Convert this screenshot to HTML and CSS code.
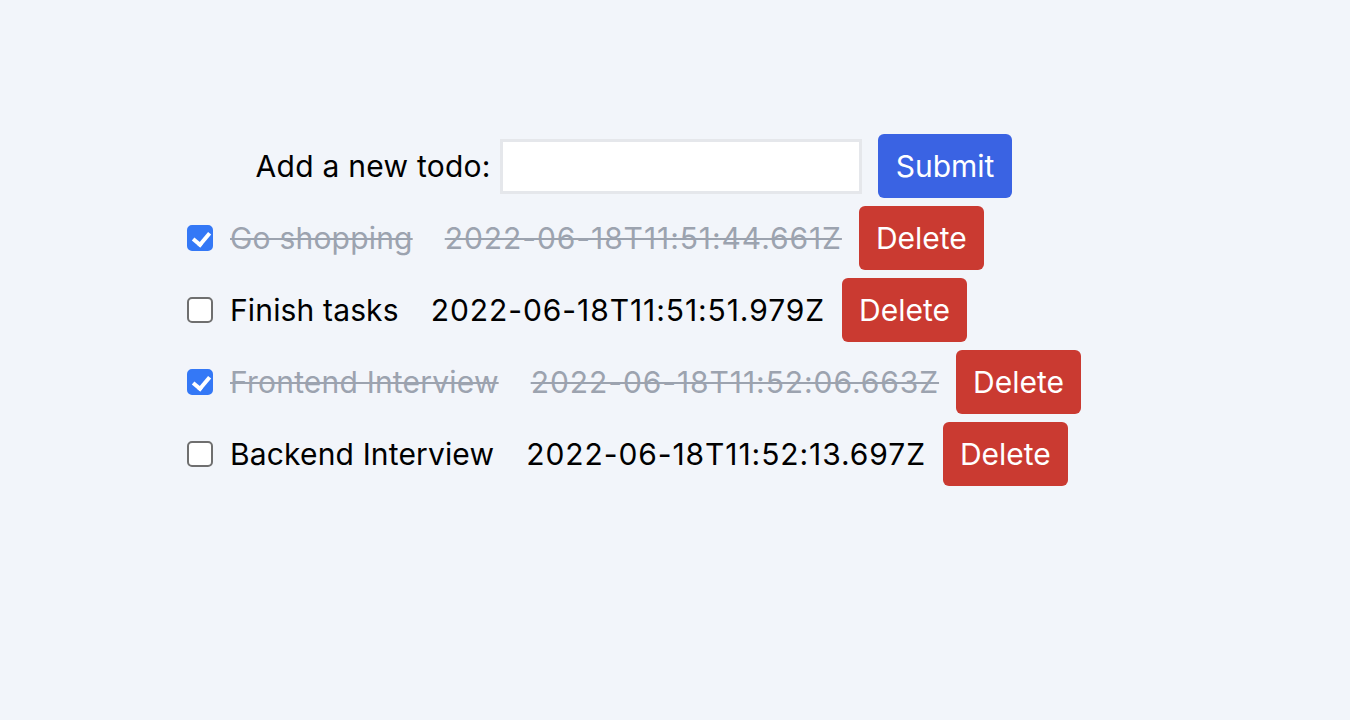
FILE: index.html
```html
<!DOCTYPE html>
<html>
<head>
<meta charset="utf-8">
<link rel="stylesheet" href="styles.css">
</head>
<body>
<div class="app">
  <form class="add-form">
    <label class="add-label" for="new">Add a new todo:</label>
    <input class="add-input" id="new" type="text">
    <button type="button" class="btn btn-submit">Submit</button>
  </form>
  <ul class="list">
    <li class="item done">
      <input class="check" type="checkbox" checked>
      <span class="title">Go shopping</span>
      <span class="time">2022-06-18T11:51:44.661Z</span>
      <button type="button" class="btn btn-delete">Delete</button>
    </li>
    <li class="item">
      <input class="check" type="checkbox">
      <span class="title">Finish tasks</span>
      <span class="time">2022-06-18T11:51:51.979Z</span>
      <button type="button" class="btn btn-delete">Delete</button>
    </li>
    <li class="item done">
      <input class="check" type="checkbox" checked>
      <span class="title">Frontend Interview</span>
      <span class="time">2022-06-18T11:52:06.663Z</span>
      <button type="button" class="btn btn-delete">Delete</button>
    </li>
    <li class="item">
      <input class="check" type="checkbox">
      <span class="title">Backend Interview</span>
      <span class="time">2022-06-18T11:52:13.697Z</span>
      <button type="button" class="btn btn-delete">Delete</button>
    </li>
  </ul>
</div>
</body>
</html>
```
FILE: styles.css
```css
html, body {
  margin: 0;
  padding: 0;
  background: #f2f5fa;
  font-family: Inter, "Liberation Sans", sans-serif;
  color: #000;
}
body {
  padding: 134px 0 0 187px;
}
.app {
  display: inline-flex;
  flex-direction: column;
  gap: 8px;
}
.add-form {
  display: flex;
  align-items: center;
  align-self: center;
  margin: 0;
}
.add-label {
  font-size: 30px;
  line-height: 40px;
  letter-spacing: 0.25px;
  margin-right: 9px;
}
.add-input {
  width: 362px;
  height: 55px;
  box-sizing: border-box;
  border: 3px solid #e5e7eb;
  background: #fff;
  margin: 0 16px 0 0;
  padding: 0 8px;
  font-size: 24px;
  outline: none;
}
.btn {
  font-family: inherit;
  font-size: 30px;
  line-height: 40px;
  padding: 12px 17px;
  border: none;
  border-radius: 6px;
  color: #fff;
  cursor: pointer;
}
.btn-submit {
  background: #3a63e3;
  padding: 12px 18px;
}
.btn-delete {
  background: #ca3a31;
}
.list {
  list-style: none;
  margin: 0;
  padding: 0;
  display: flex;
  flex-direction: column;
  gap: 8px;
}
.item {
  display: flex;
  align-items: center;
  font-size: 30px;
  line-height: 40px;
}
.check {
  appearance: none;
  -webkit-appearance: none;
  width: 26px;
  height: 26px;
  margin: 0 17px 0 0;
  box-sizing: border-box;
  border: 2px solid #6f6f6f;
  border-radius: 5px;
  background: #fff;
  position: relative;
  flex: none;
}
.check:checked {
  background: #3478f6;
  border-color: #3478f6;
}
.check:checked::after {
  content: "";
  position: absolute;
  left: 7px;
  top: 2px;
  width: 7px;
  height: 13px;
  border: solid #fff;
  border-width: 0 4px 4px 0;
  transform: rotate(40deg);
}
.title {
  letter-spacing: 0.15px;
  margin-right: 32px;
}
.time {
  letter-spacing: 0.92px;
  margin-right: 17px;
}
.done .title {
  letter-spacing: 0.2px;
}
.done .title,
.done .time {
  color: #9ca3af;
  text-decoration: line-through;
  text-decoration-thickness: 2px;
}
```
